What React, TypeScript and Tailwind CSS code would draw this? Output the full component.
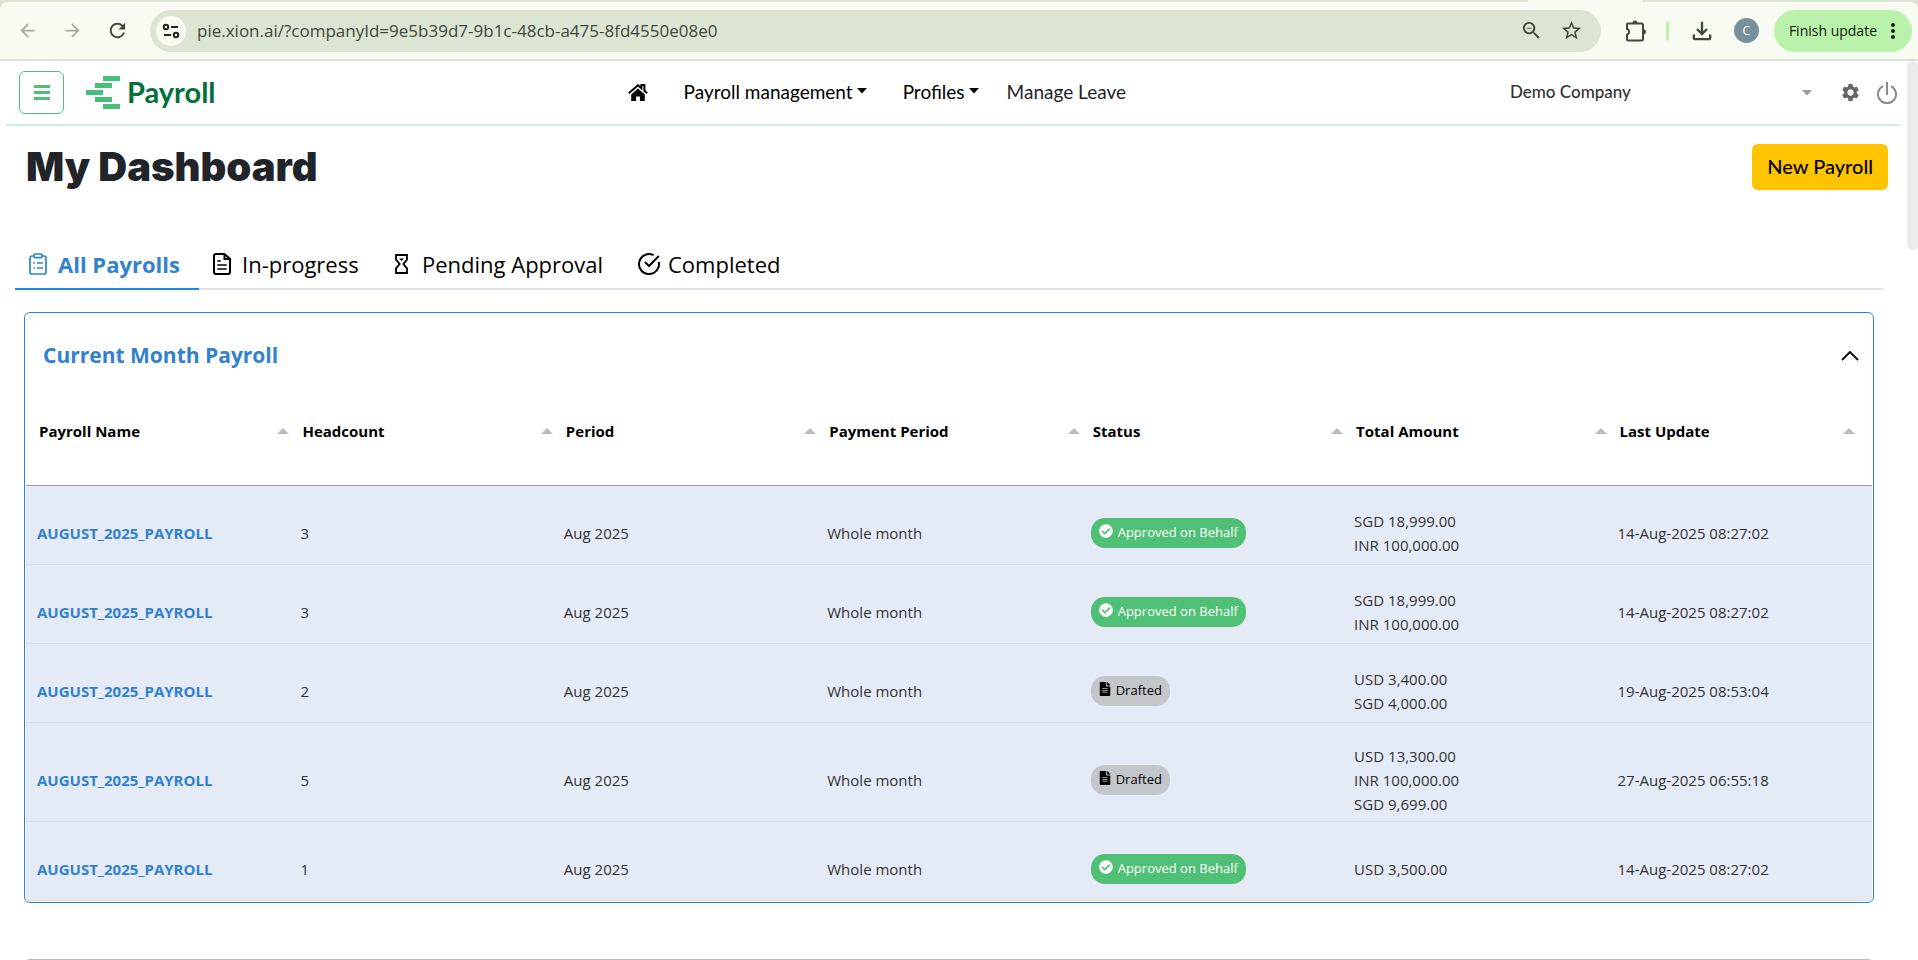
import React, { useState } from "react";
import {
  MdArrowBack,
  MdArrowForward,
  MdOutlineFileDownload,
  MdRefresh,
  MdStarOutline,
  MdZoomOut,
  MdMoreVert,
  MdSettings,
} from "react-icons/md";
import { FaCheckCircle, FaFileAlt } from "react-icons/fa";

type Status = "approved" | "drafted";

type Payroll = {
  name: string;
  headcount: number;
  period: string;
  paymentPeriod: string;
  status: Status;
  amounts: string[];
  updated: string;
};

const payrolls: Payroll[] = [
  {
    name: "AUGUST_2025_PAYROLL",
    headcount: 3,
    period: "Aug 2025",
    paymentPeriod: "Whole month",
    status: "approved",
    amounts: ["SGD 18,999.00", "INR 100,000.00"],
    updated: "14-Aug-2025 08:27:02",
  },
  {
    name: "AUGUST_2025_PAYROLL",
    headcount: 3,
    period: "Aug 2025",
    paymentPeriod: "Whole month",
    status: "approved",
    amounts: ["SGD 18,999.00", "INR 100,000.00"],
    updated: "14-Aug-2025 08:27:02",
  },
  {
    name: "AUGUST_2025_PAYROLL",
    headcount: 2,
    period: "Aug 2025",
    paymentPeriod: "Whole month",
    status: "drafted",
    amounts: ["USD 3,400.00", "SGD 4,000.00"],
    updated: "19-Aug-2025 08:53:04",
  },
  {
    name: "AUGUST_2025_PAYROLL",
    headcount: 5,
    period: "Aug 2025",
    paymentPeriod: "Whole month",
    status: "drafted",
    amounts: ["USD 13,300.00", "INR 100,000.00", "SGD 9,699.00"],
    updated: "27-Aug-2025 06:55:18",
  },
  {
    name: "AUGUST_2025_PAYROLL",
    headcount: 1,
    period: "Aug 2025",
    paymentPeriod: "Whole month",
    status: "approved",
    amounts: ["USD 3,500.00"],
    updated: "14-Aug-2025 08:27:02",
  },
];

const columns = [
  "Payroll Name",
  "Headcount",
  "Period",
  "Payment Period",
  "Status",
  "Total Amount",
  "Last Update",
];

function SiteControlsIcon() {
  return (
    <svg width="18" height="18" viewBox="0 0 18 18" fill="none" stroke="#1f241c" strokeWidth="2">
      <circle cx="4" cy="5" r="2.2" />
      <path d="M9 5h7M2 13h7" />
      <circle cx="14" cy="13" r="2.2" />
    </svg>
  );
}

function ExtensionIcon() {
  return (
    <svg width="22" height="22" viewBox="0 0 22 22" fill="none" stroke="currentColor" strokeWidth="2">
      <path d="M3 3.500h13.500a1.500 1.500 0 0 1 1.500 1.500v14a1.500 1.500 0 0 1-1.500 1.500H3.500A1.500 1.500 0 0 1 2 19v-4.200a3.200 3.200 0 0 0 0-6V4.500a1 1 0 0 1 1-1z" />
      <path d="M7.500 3a2.500 2.500 0 0 1 5 0zM18.500 9.300a2.500 2.500 0 0 1 0 5z" fill="currentColor" stroke="none" />
    </svg>
  );
}

function LogoMark() {
  return (
    <svg width="34" height="33" viewBox="0 0 34 33" fill="#48bf78">
      <rect x="17" y="0" width="17" height="5" />
      <rect x="9" y="7" width="17" height="5" />
      <rect x="0" y="14" width="17" height="5" />
      <rect x="9" y="21" width="17" height="5" />
      <rect x="17" y="28" width="17" height="5" />
    </svg>
  );
}

function HomeIcon() {
  return (
    <svg width="20" height="17" viewBox="0 0 20 17">
      <path d="M0.8 9.2 10 1.2l3.4 3V1h3v5.8l2.8 2.4" fill="none" stroke="#000" strokeWidth="2" />
      <path d="M10 4.6 3.2 10.4V17h4.9v-4.6h3.8V17h4.9v-6.6z" fill="#000" />
    </svg>
  );
}

function PowerIcon() {
  return (
    <svg width="20" height="22" viewBox="0 0 20 22" fill="none" stroke="#8b8b8b" strokeWidth="2">
      <path d="M10 0v13" />
      <path d="M6 4.2a9 9 0 1 0 8 0" />
    </svg>
  );
}

function Caret({ className = "" }: { className?: string }) {
  return (
    <svg width="10" height="6" viewBox="0 0 10 6" fill="currentColor" className={className}>
      <path d="M0 0h10L5 5.5z" />
    </svg>
  );
}

function SortArrow() {
  return (
    <svg width="12" height="6" viewBox="0 0 12 6" fill="#bbb">
      <path d="M0 6h12L6 0z" />
    </svg>
  );
}

function ClipboardIcon() {
  return (
    <svg width="18" height="22" viewBox="0 0 18 22" fill="none" stroke="currentColor" strokeWidth="1.7">
      <path d="M5 3H3a2 2 0 0 0-2 2v14a2 2 0 0 0 2 2h12a2 2 0 0 0 2-2V5a2 2 0 0 0-2-2h-2" />
      <rect x="5" y="1" width="8" height="3.6" rx="1" />
      <path d="M4.2 10h1.6M8 10h6M4.2 15h1.6M8 15h6" />
    </svg>
  );
}

function DocumentIcon() {
  return (
    <svg width="18" height="22" viewBox="0 0 18 22" fill="none" stroke="currentColor" strokeWidth="2">
      <path d="M11.5 1H3a2 2 0 0 0-2 2v16a2 2 0 0 0 2 2h12a2 2 0 0 0 2-2V6z" />
      <path d="M11.5 1v5H17" />
      <path d="M4.3 8h3.4M4.3 12h9.4M4.3 16h9.4" strokeWidth="1.6" />
    </svg>
  );
}

function HourglassIcon() {
  return (
    <svg width="13" height="20" viewBox="0 0 13 20" fill="none" stroke="currentColor" strokeWidth="1.8">
      <path d="M1 1h11v4.6L8.4 10l3.6 4.4V19H1v-4.6L4.6 10 1 5.6z" />
      <path d="M4 4.6h5L6.5 7z" fill="currentColor" stroke="none" />
    </svg>
  );
}

function CompletedIcon() {
  return (
    <svg width="22" height="22" viewBox="0 0 22 22" fill="none" stroke="currentColor" strokeWidth="2">
      <path d="M15.6 2.2A10 10 0 1 0 20.8 9" />
      <path d="M7 9l4 4L20.8 3" />
    </svg>
  );
}

const tabs = [
  { label: "All Payrolls", icon: ClipboardIcon, width: "w-[184px] gap-[11px] pl-[14px]" },
  { label: "In-progress", icon: DocumentIcon, width: "w-[180px] gap-[11px] pl-[14px]" },
  { label: "Pending Approval", icon: HourglassIcon, width: "w-[245px] gap-[14px] pl-4" },
  { label: "Completed", icon: CompletedIcon, width: "w-[173px] gap-2 pl-[14px]" },
];

function StatusBadge({ status }: { status: Status }) {
  if (status === "approved") {
    return (
      <span className="inline-flex h-[30px] items-center gap-[5px] rounded-[14px] bg-[#50c076] px-2 text-[13px] text-white">
        <FaCheckCircle size={14} className="mb-1" />
        Approved on Behalf
      </span>
    );
  }
  return (
    <span className="inline-flex h-[30px] items-center gap-[5px] rounded-[14px] bg-[#c4c7c9] px-2 text-[13px] text-black">
      <FaFileAlt size={14} className="-mx-px mb-1" />
      Drafted
    </span>
  );
}

function BrowserBar() {
  return (
    <div className="shrink-0 border-b-2 border-[#dfe2d6] bg-[#dce5d4]">
      {/* Foot of the active tab */}
      <div className="flex h-[2px] justify-end pr-[275px]">
        <div className="w-[115px] bg-[#f8fbf2]" />
      </div>
      <div className="flex h-[57px] items-center rounded-t-lg bg-[#f8fbf2] pr-[6px] pl-[17px] text-[#3d4a38]">
        <button type="button" aria-label="Back" className="text-[#a4aba0]">
          <MdArrowBack size={21} />
        </button>
        <button type="button" aria-label="Forward" className="ml-6 text-[#a4aba0]">
          <MdArrowForward size={21} />
        </button>
        <button type="button" aria-label="Reload" className="ml-[23px]">
          <MdRefresh size={23} />
        </button>
        <div className="ml-[21px] flex h-[42px] flex-1 items-center rounded-full bg-[#dce5d4] pr-[18px] pl-[6px]">
          <button
            type="button"
            aria-label="Site information"
            className="flex size-[30px] items-center justify-center rounded-full bg-[#f8fbf2]"
          >
            <SiteControlsIcon />
          </button>
          <input
            aria-label="Address"
            defaultValue="pie.xion.ai/?companyId=9e5b39d7-9b1c-48cb-a475-8fd4550e08e0"
            className="ml-[11px] h-8 min-w-0 flex-1 bg-transparent text-[17px] text-[#41483d] outline-none"
          />
          <button type="button" aria-label="Zoom">
            <MdZoomOut size={23} />
          </button>
          <button type="button" aria-label="Bookmark" className="ml-[17px]">
            <MdStarOutline size={23} />
          </button>
        </div>
        <button type="button" aria-label="Extensions" className="ml-6">
          <ExtensionIcon />
        </button>
        <span className="ml-[19px] h-5 w-[3px] rounded-full bg-[#bcf2ae]" />
        <button type="button" aria-label="Downloads" className="ml-[19px]">
          <MdOutlineFileDownload size={28} />
        </button>
        <span className="ml-[18px] flex size-[25px] items-center justify-center rounded-full bg-[#78909c] text-xs text-white">
          C
        </span>
        <button
          type="button"
          className="ml-[15px] flex h-[42px] items-center gap-1 rounded-full bg-[#bbf2ab] pr-[7px] pl-[15px] text-sm text-[#0b2005]"
        >
          Finish update
          <MdMoreVert size={24} />
        </button>
      </div>
    </div>
  );
}

function AppHeader() {
  return (
    <header className="mr-[6px] ml-[6px] flex h-[65px] items-center border-b-2 border-[#d2eddc] pr-1 pl-[13px] font-[Lato,sans-serif]">
      <button
        type="button"
        aria-label="Toggle menu"
        className="flex h-[43px] w-[45px] flex-col items-center justify-center gap-[3px] rounded-md border border-[#4fbf78]"
      >
        <span className="h-[3px] w-4 bg-[#4fbf78]" />
        <span className="h-[3px] w-4 bg-[#4fbf78]" />
        <span className="h-[3px] w-4 bg-[#4fbf78]" />
      </button>
      <a href="#" className="ml-[22px] flex items-center gap-[7px] text-[#006f3c]">
        <LogoMark />
        <span className="pb-[2px] text-[29px] leading-8 font-bold">Payroll</span>
      </a>
      <nav className="ml-auto flex items-center pl-7 text-[19px] text-black">
        <a href="#" aria-label="Home">
          <HomeIcon />
        </a>
        <button type="button" className="ml-9 flex items-center gap-1">
          Payroll management
          <Caret className="mb-1" />
        </button>
        <button type="button" className="ml-9 flex items-center gap-1">
          Profiles
          <Caret className="mb-1" />
        </button>
        <a href="#" className="ml-7 text-[#212529]">
          Manage Leave
        </a>
      </nav>
      <div className="ml-auto flex items-center">
        <div className="relative flex items-center">
          <select
            aria-label="Company"
            className="w-[302px] appearance-none bg-transparent pb-[2px] text-[17px] font-medium text-[#333] outline-none"
          >
            <option>Demo Company</option>
          </select>
          <Caret className="pointer-events-none absolute right-0 text-[#999]" />
        </div>
        <button type="button" aria-label="Settings" className="ml-7 text-[#666]">
          <MdSettings size={21} />
        </button>
        <button type="button" aria-label="Log out" className="ml-4">
          <PowerIcon />
        </button>
      </div>
    </header>
  );
}

export default function App() {
  const [activeTab, setActiveTab] = useState("All Payrolls");
  const [open, setOpen] = useState(true);

  return (
    <div className="flex h-screen flex-col overflow-hidden bg-white font-['Open_Sans','Noto_Sans',sans-serif]">
      <BrowserBar />
      <div className="flex min-h-0 flex-1">
        <div className="min-w-0 flex-1 overflow-hidden">
          <AppHeader />

          <main className="pl-[15px]">
            <div className="flex items-start justify-between pt-[18px] pr-[19px] pl-[11px]">
              <h1 className="font-[Inter,sans-serif] text-[40px] leading-[46px] font-black text-[#212529]">My Dashboard</h1>
              <button
                type="button"
                className="h-[46px] rounded-md bg-[#ffc400] px-[15px] pb-[2px] font-[Lato,sans-serif] text-xl font-medium text-black"
              >
                New Payroll
              </button>
            </div>

            {/* Tabs */}
            <div role="tablist" className="mt-[50px] mr-6 flex h-[50px] border-b-2 border-[#dee2e6]">
              {tabs.map(({ label, icon: Icon, width }) => (
                <button
                  key={label}
                  type="button"
                  role="tab"
                  aria-selected={activeTab === label}
                  onClick={() => setActiveTab(label)}
                  className={`-mb-[2px] flex h-[50px] items-center border-b-2 text-[22px] whitespace-nowrap ${width} ${
                    activeTab === label
                      ? "border-[#1e88e5] font-bold text-[#3182ce]"
                      : "border-transparent text-black"
                  }`}
                >
                  <Icon />
                  {label}
                </button>
              ))}
            </div>

            {/* Current month */}
            <section className="mt-[22px] mr-[33px] ml-[9px] rounded-md border border-[#3182ce] px-px pb-px">
              <div className="flex h-[86px] items-center justify-between pr-[13px] pl-[17px]">
                <h2 className="text-[21px] font-bold text-[#3182ce]">Current Month Payroll</h2>
                <button type="button" aria-label="Toggle current month payroll" onClick={() => setOpen(!open)}>
                  <svg width="18" height="10" viewBox="0 0 18 10" fill="none" stroke="#111" strokeWidth="2">
                    <path d="M1 9l8-8 8 8" />
                  </svg>
                </button>
              </div>
              {open && (
                <table className="w-full table-fixed border-collapse text-left text-[15px] text-[#333]">
                  <thead>
                    <tr className="h-[86px] border-b border-[#999] text-black">
                      {columns.map((column) => (
                        <th key={column} className="w-[14.27%] p-0 pb-[21px] pl-[13px] font-bold last:w-auto last:pr-[17px]">
                          <div className="flex items-center justify-between">
                            {column}
                            <SortArrow />
                          </div>
                        </th>
                      ))}
                    </tr>
                  </thead>
                  <tbody>
                    {payrolls.map((row, idx) => (
                      <tr key={idx} className="h-[79px] border-b border-[#dcdee0] bg-[#e4eaf6]">
                        <td className="pt-[17px] pl-[11px]">
                          <a href="#" className="font-bold text-[#3182ce]">
                            {row.name}
                          </a>
                        </td>
                        <td className="pt-[17px] pl-[11px]">{row.headcount}</td>
                        <td className="pt-[17px] pl-[11px]">{row.period}</td>
                        <td className="pt-[17px] pl-[11px]">{row.paymentPeriod}</td>
                        <td className="pt-[17px] pl-[11px]">
                          <div className="flex">
                            <StatusBadge status={row.status} />
                          </div>
                        </td>
                        <td className="pt-[21px] pb-[5px] pl-[11px] leading-6">
                          {row.amounts.map((amount) => (
                            <div key={amount}>{amount}</div>
                          ))}
                        </td>
                        <td className="pt-[17px] pl-[11px]">{row.updated}</td>
                      </tr>
                    ))}
                  </tbody>
                </table>
              )}
            </section>

            <section className="mt-14 mr-[33px] ml-[9px] h-40 rounded-md border border-[#b9bcc4]" />
          </main>
        </div>
        <div className="h-[189px] w-[11px] shrink-0 rounded-full bg-[#ebebeb]" />
      </div>
    </div>
  );
}
